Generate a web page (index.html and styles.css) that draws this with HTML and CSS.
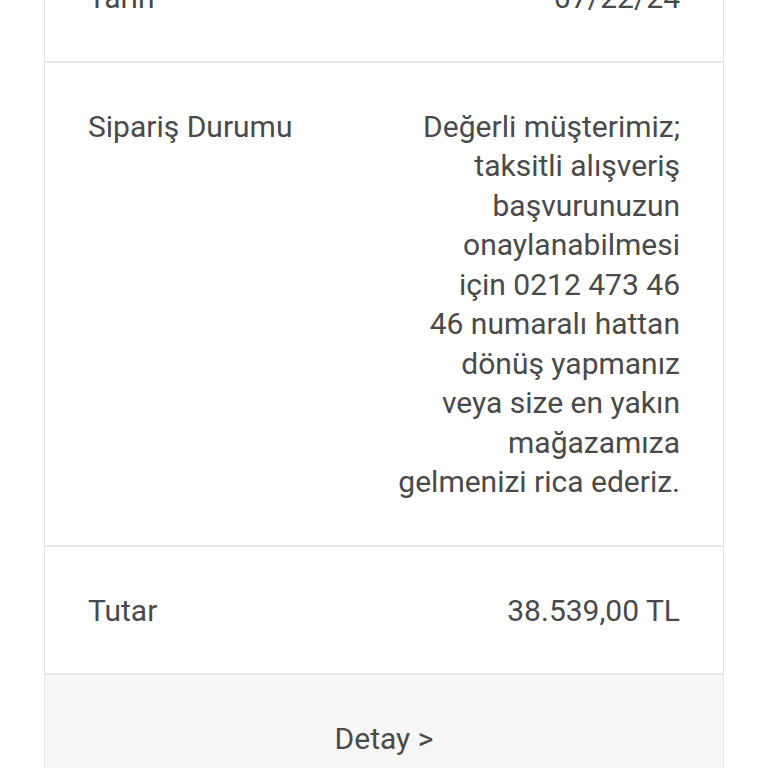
FILE: index.html
```html
<!DOCTYPE html>
<html lang="tr">
<head>
  <meta charset="UTF-8" />
  <meta name="viewport" content="width=device-width, initial-scale=1" />
  <title>Sipariş Bilgileri</title>
  <link rel="stylesheet" href="styles.css">
</head>
<body>

<div class="order-card">
  <div class="order-row">
    <div class="row-label">Tarih</div>
    <div class="row-value">07/22/24</div>
  </div>
  <div class="order-row">
    <div class="row-label">Sipariş Durumu</div>
    <div class="row-value">Değerli müşterimiz;<br>taksitli alışveriş<br>başvurunuzun<br>onaylanabilmesi<br>için 0212 473 46<br>46 numaralı hattan<br>dönüş yapmanız<br>veya size en yakın<br>mağazamıza<br>gelmenizi rica ederiz.</div>
  </div>
  <div class="order-row">
    <div class="row-label">Tutar</div>
    <div class="row-value">38.539,00 TL</div>
  </div>
  <a class="detail-link" href="#">Detay &gt;</a>
</div>

</body>
</html>
```

FILE: styles.css
```css
body {
  font-family: Roboto, "Noto Sans", sans-serif;
  background: #fff;
  margin: 0;
  color: #4a4a4a;
}
.order-card {
  margin: -67px 44px 0 44px;
  border: 1px solid #e4e4e4;
  background: white;
}
.order-row {
  display: flex;
  justify-content: space-between;
  align-items: flex-start;
  padding: 44px 43px 43px 43px;
  border-bottom: 2px solid #e8e8e8;
  font-size: 30px;
  line-height: 39.5px;
}
.row-label {
  flex-shrink: 0;
}
.row-value {
  text-align: right;
}
.detail-link {
  display: block;
  background: #f7f7f7;
  text-align: center;
  padding: 44px 0;
  font-size: 30px;
  line-height: 39.5px;
  color: #4a4a4a;
  text-decoration: none;
}
```
